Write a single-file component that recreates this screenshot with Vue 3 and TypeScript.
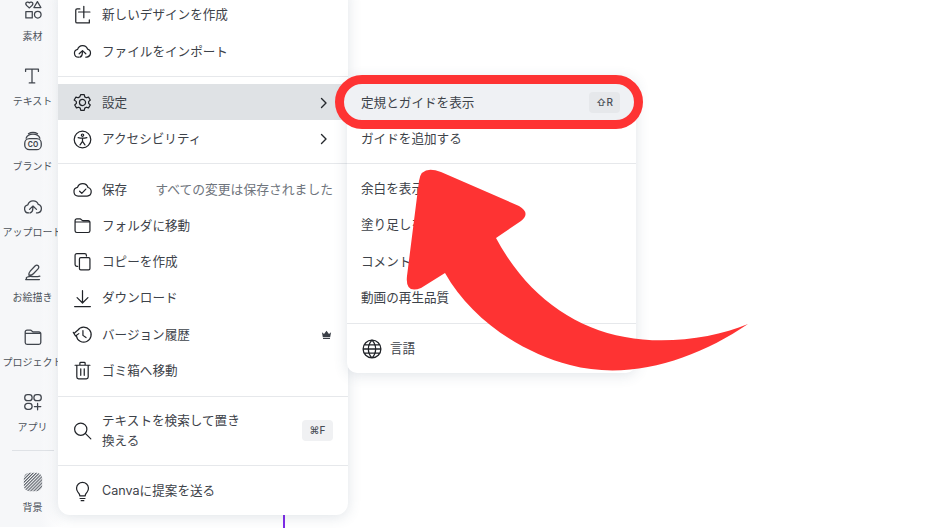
<script setup lang="ts">
const icons: Record<string, string> = {
  elements: 'M8 3.2c-1-1.6-3.9-1.2-3.9 1 0 1.6 2 3 3.9 4.4 1.9-1.4 3.9-2.8 3.9-4.4 0-2.2-2.9-2.6-3.9-1ZM16.800 1.800l3.800 6.400h-7.600ZM4.200 12.600h7v7h-7ZM20.800 16.100a3.600 3.600 0 1 1-7.200 0 3.600 3.600 0 0 1 7.200 0Z',
  text: 'M5 7V4.500h14V7M12 4.500v15M9 19.500h6',
  upload: 'M7.500 18.500A4.500 4.500 0 0 1 6.400 9.600a6 6 0 0 1 11.400-.4 4.800 4.800 0 0 1-.6 9.300h-1.400M8.200 14.600 12 11l3.800 3.600M12 11c-.6 4 .8 6-3 7.500',
  draw: 'M7.500 15.500c-.3-2 .5-3.400 1.700-4.700l5-5.300c1-1 2.600-1.200 3.500-.3s.8 2.400-.2 3.400l-5.100 5.300c-1.300 1.300-3 1.800-4.900 1.600ZM5 19.500c-1.500-1.500 2-3 6-2.600 3 .3 6 .3 8.500-.4M4 20.300h15',
  folder: 'M3.500 8V6.500a2 2 0 0 1 2-2h3.800c1.200 0 1.500 1.900 3 1.900h6.200a2 2 0 0 1 2 2V18a2 2 0 0 1-2 2h-13a2 2 0 0 1-2-2V8h17',
  apps: 'M6 4h2a3 3 0 0 1 3 3v.5a3 3 0 0 1-3 3H6a3 3 0 0 1-3-3V7a3 3 0 0 1 3-3ZM16 4h2a3 3 0 0 1 3 3v.5a3 3 0 0 1-3 3h-2a3 3 0 0 1-3-3V7a3 3 0 0 1 3-3ZM6 13.500h2a3 3 0 0 1 3 3v.5a3 3 0 0 1-3 3H6a3 3 0 0 1-3-3v-.5a3 3 0 0 1 3-3ZM17 13.500v7M13.500 17h7',
  plusdoc: 'M9 4.500H5.800a1.500 1.500 0 0 0-1.500 1.500v13a1.500 1.500 0 0 0 1.500 1.500h13.500M13.500 1.500v13M7.500 8h13M19.800 17v3.500',
  gear: 'M10 3h4l.6 2.600 1.800 1 2.500-.8 2 3.400-1.900 1.800v2l1.900 1.800-2 3.400-2.500-.8-1.800 1-.6 2.600h-4l-.6-2.600-1.800-1-2.500.8-2-3.400 1.900-1.800v-2L2.500 9.200l2-3.400 2.500.8 1.800-1ZM15.500 12a3.500 3.500 0 1 1-7 0 3.500 3.500 0 0 1 7 0Z',
  access: 'M21.500 12a9.500 9.500 0 1 1-19 0 9.500 9.500 0 0 1 19 0ZM13.300 7a1.300 1.300 0 1 1-2.600 0 1.300 1.300 0 0 1 2.600 0ZM7 9.800c3.300 1 6.700 1 10 0M12 10.500v4M9.200 18.200l2.800-4 2.800 4',
  cloudcheck: 'M7.500 19.500A5 5 0 0 1 6.300 9.600a6.300 6.300 0 0 1 12 .1 5 5 0 0 1-1 9.800ZM8.700 14l2.500 2.500 4.600-5',
  copy: 'M6.500 17.500h-1a2 2 0 0 1-2-2V5a2 2 0 0 1 2-2h9a2 2 0 0 1 2 2v.8M10 7.500h9a1.500 1.500 0 0 1 1.500 1.500v11a1.500 1.500 0 0 1-1.500 1.500h-9A1.500 1.500 0 0 1 8.500 20V9A1.500 1.500 0 0 1 10 7.500Z',
  download: 'M12 3v14M5.800 11l6.200 6.200 6.200-6.200M3 21.200h18',
  history: 'M5 13.500a8.500 8.500 0 1 0 1.500-6.300L3.200 10M1.500 9.500l2.500 4.200 3.800-2.700M12.500 7.500V13l3.500 2.500',
  trash: 'M3.500 6h17M9 6V3.800a1 1 0 0 1 1-1h4a1 1 0 0 1 1 1V6M5.500 6v13.500a2 2 0 0 0 2 2h9a2 2 0 0 0 2-2V6M10 10v7.500M14 10v7.500',
  search: 'M17 10.500a7 7 0 1 1-14 0 7 7 0 0 1 14 0ZM15.500 15.500l6 6',
  bulb: 'M9 17c-.2-2-1-3-2.200-4.300A6.800 6.800 0 1 1 17.200 12.700C16 14 15.200 15 15 17ZM9.200 20h5.600M10.500 22.500h3',
  globe: 'M21.700 12a9.700 9.700 0 1 1-19.400 0 9.700 9.700 0 0 1 19.400 0ZM2.300 12h19.400M12 2.300c-5.300 5.500-5.300 13.900 0 19.400M12 2.300c5.300 5.500 5.300 13.900 0 19.400M3.500 7.500h17M3.500 16.500h17',
}

interface MenuRow {
  label: string
  icon?: string
  chevron?: boolean
  active?: boolean
  hint?: string
  crown?: boolean
  key?: string
  tall?: boolean
}

const sideItems = [
  { label: '素材', icon: 'elements' },
  { label: 'テキスト', icon: 'text' },
  { label: 'ブランド', icon: 'brand' },
  { label: 'アップロード', icon: 'upload' },
  { label: 'お絵描き', icon: 'draw' },
  { label: 'プロジェクト', icon: 'folder' },
  { label: 'アプリ', icon: 'apps' },
]

const mainMenu: MenuRow[][] = [
  [
    { label: '新しいデザインを作成', icon: 'plusdoc' },
    { label: 'ファイルをインポート', icon: 'upload' },
  ],
  [
    { label: '設定', icon: 'gear', chevron: true, active: true },
    { label: 'アクセシビリティ', icon: 'access', chevron: true },
  ],
  [
    { label: '保存', icon: 'cloudcheck', hint: 'すべての変更は保存されました' },
    { label: 'フォルダに移動', icon: 'folder' },
    { label: 'コピーを作成', icon: 'copy' },
    { label: 'ダウンロード', icon: 'download' },
    { label: 'バージョン履歴', icon: 'history', crown: true },
    { label: 'ゴミ箱へ移動', icon: 'trash' },
  ],
  [{ label: 'テキストを検索して置き換える', icon: 'search', key: '⌘F', tall: true }],
  [{ label: 'Canvaに提案を送る', icon: 'bulb' }],
]

const subMenu: MenuRow[][] = [
  [{ label: '定規とガイドを表示', key: '⇧R', active: true }, { label: 'ガイドを追加する' }],
  [
    { label: '余白を表示' },
    { label: '塗り足しを表示' },
    { label: 'コメントを表示' },
    { label: '動画の再生品質' },
  ],
  [{ label: '言語', icon: 'globe' }],
]
</script>

<template>
  <div class="stage">
    <aside class="side">
      <div v-for="item in sideItems" :key="item.label" class="side-item">
        <svg v-if="item.icon === 'brand'" class="side-icon" viewBox="0 0 24 24">
          <rect x="3" y="9.500" width="18" height="12" rx="5" class="line" />
          <path class="line" d="M4.500 9c1-3 3-4.500 7.500-4.500S18.500 6 19.500 9M7 4c1.500-1 3-1.500 5-1.500s3.500.5 5 1.500" />
          <text x="12" y="18" class="co">CO</text>
        </svg>
        <svg v-else class="side-icon" viewBox="0 0 24 24"><path class="line" :d="icons[item.icon]" /></svg>
        <span class="side-label">{{ item.label }}</span>
      </div>
      <div class="side-rule"></div>
      <div class="side-item">
        <svg class="side-icon" viewBox="0 0 24 24">
          <defs>
            <pattern id="hatch" width="2.400" height="2.400" patternUnits="userSpaceOnUse" patternTransform="rotate(-45)">
              <rect width="2.400" height="1.200" fill="#5a5f67" />
            </pattern>
          </defs>
          <rect x="2" y="2" width="20" height="20" rx="6" fill="url(#hatch)" />
        </svg>
        <span class="side-label">背景</span>
      </div>
    </aside>

    <div class="canvas-line"></div>

    <nav class="menu main">
      <section v-for="(group, g) in mainMenu" :key="g" class="group">
        <div v-for="row in group" :key="row.label" class="row" :class="{ active: row.active, tall: row.tall }">
          <svg class="row-icon" viewBox="0 0 24 24"><path class="line" :d="icons[row.icon ?? '']" /></svg>
          <span class="row-label">{{ row.label }}</span>
          <span v-if="row.hint" class="hint">{{ row.hint }}</span>
          <svg v-if="row.chevron" class="chevron" viewBox="0 0 12 12"><path class="line" d="M3.500 1.500 8 6l-4.500 4.500" /></svg>
          <svg v-if="row.crown" class="crown" viewBox="0 0 12 12"><path d="M1 3.500 3.300 5.500 6 1.800l2.700 3.700L11 3.500 10 9H2ZM2.200 9.800h7.600v1H2.200Z" fill="#3a3f47" /></svg>
          <kbd v-if="row.key" class="key">{{ row.key }}</kbd>
        </div>
      </section>
    </nav>

    <nav class="menu sub">
      <section v-for="(group, g) in subMenu" :key="g" class="group">
        <div v-for="row in group" :key="row.label" class="row" :class="{ ringed: row.active }">
          <svg v-if="row.icon" class="globe" viewBox="0 0 24 24"><path class="line" :d="icons[row.icon]" /></svg>
          <span class="row-label">{{ row.label }}</span>
          <kbd v-if="row.key" class="key">{{ row.key }}</kbd>
        </div>
      </section>
    </nav>

    <svg class="arrow" viewBox="0 0 940 528">
      <path
        d="M496 238 L521 221 Q531 213 519 206 L441 172 Q421 165 419 181 L407 276 Q405 294 421 288 L445 273
           C470 318 520 352 570 365 C 630 381 695 360 748 324
           C 715 338 665 345 625 337 C 570 327 525 292 496 238 Z"
        fill="#fe3333"
      />
    </svg>
  </div>
</template>

<style>
html, body { margin: 0; background: #fff; }
</style>

<style scoped>
.stage {
  position: relative;
  width: 940px;
  height: 528px;
  overflow: hidden;
  background: #fff;
  font-family: Inter, "Noto Sans CJK JP", sans-serif;
  color: #3d4249;
}
.side {
  width: 65px;
  height: 528px;
  background: linear-gradient(90deg, #f6f7f9 62%, #fff 100%);
  display: flex;
  flex-direction: column;
  align-items: center;
  margin-top: -1px;
}
.side-item {
  display: flex;
  flex-direction: column;
  align-items: center;
  gap: 6px;
  height: 44px;
  margin-bottom: 21.200px;
  flex: none;
}
.side-icon { width: 22px; height: 22px; margin: 1px 0; flex: none; color: #40454d; }
.side-label {
  font-size: 10px;
  line-height: 14px;
  white-space: nowrap;
  color: #4d535b;
}
.side-rule {
  width: 42px;
  height: 1px;
  flex: none;
  margin: -5px 0 19px;
  background: #dfe2e6;
}
.line {
  fill: none;
  stroke: currentColor;
  stroke-width: 1.400;
  stroke-linecap: round;
  stroke-linejoin: round;
}
.co {
  font: 700 7.500px Inter, sans-serif;
  text-anchor: middle;
  fill: currentColor;
}
.canvas-line {
  position: absolute;
  left: 283px;
  top: 505px;
  width: 2px;
  height: 23px;
  background: #7d2ae8;
}
.menu {
  position: absolute;
  background: #fff;
  box-sizing: border-box;
  box-shadow: 0 2px 14px rgba(64, 87, 109, 0.16);
}
.main {
  left: 58px;
  top: -10px;
  width: 290px;
  height: 525px;
  border-radius: 0 0 12px 12px;
}
.sub {
  left: 347px;
  top: 77px;
  width: 289px;
  height: 296px;
  border-radius: 10px;
}
.group {
  padding: 7px 0;
  border-bottom: 1px solid #e6e8eb;
}
.group:first-child { padding-bottom: 6px; }
.group:last-child { border-bottom: 0; }
.row {
  display: flex;
  align-items: center;
  height: 36.300px;
  box-sizing: border-box;
  padding: 0 14px 0 15px;
  font-size: 12.600px;
  line-height: 19.500px;
  white-space: nowrap;
}
.main .group:nth-child(2) .row { padding-top: 2px; }
.row.active { background: #dfe2e5; }
.row.tall { height: 54px; white-space: normal; }
.row-icon { width: 21px; height: 21px; flex: none; margin-right: 8px; margin-left: -1px; padding-right: 1px; box-sizing: content-box; color: #202328; }
.row-label { flex: 1 1 auto; min-width: 0; }
.tall .row-label { flex: 0 0 145px; margin-right: auto; }
.hint { flex: none; margin-right: 1px; font-size: 12.800px; color: #6f757d; }
.chevron { width: 12px; height: 12px; flex: none; color: #25282d; margin-right: 4px; }
.crown { width: 11px; height: 11px; flex: none; margin-right: 2px; }
.key {
  flex: none;
  width: 31px;
  height: 21px;
  margin-right: 1px;
  border-radius: 4px;
  background: #f0f1f3;
  font: 500 10px/21px Inter, "DejaVu Sans", sans-serif;
  text-align: center;
  color: #484d55;
}
.sub .row { padding: 0 15px 0 14px; }
.sub .group:first-child { padding-top: 7px; }
.sub .group:last-child { padding-bottom: 6px; }
.ringed { position: relative; z-index: 1; padding-top: 2px !important; }
.ringed .key { background: #e6e8eb; margin-top: -2px; }
.ringed::before {
  content: "";
  position: absolute;
  z-index: -1;
  left: -12px;
  right: -7px;
  top: -9px;
  bottom: -9px;
  border: 9px solid #fe3333;
  border-radius: 28px;
  background: #eff1f4;
}
.globe { width: 22px; height: 22px; flex: none; margin-right: 7px; color: #202328; }
.arrow {
  position: absolute;
  inset: 0;
  width: 940px;
  height: 528px;
  pointer-events: none;
}
</style>
